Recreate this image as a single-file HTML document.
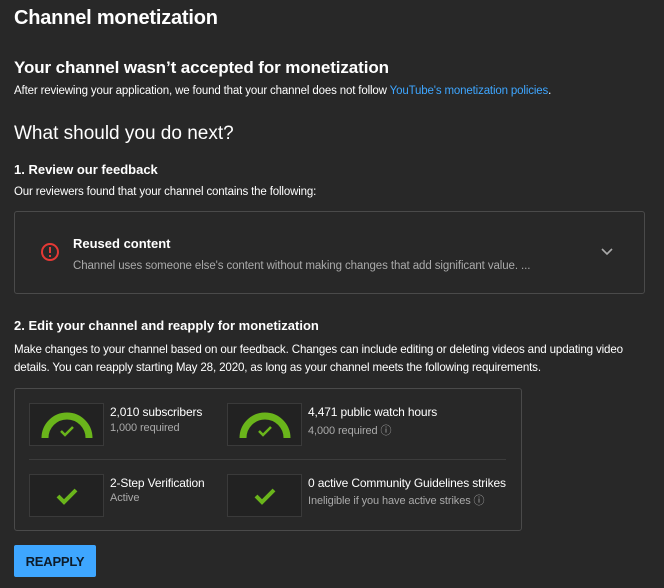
<html><head><style>
body{margin:0;width:664px;height:588px;background:#282828;font-family:"Liberation Sans",sans-serif;color:#fff;position:relative;overflow:hidden}
.a{position:absolute;white-space:nowrap}
.s{font-size:12px;color:#fff;letter-spacing:-0.15px}
.g{color:#aaa;font-size:11px;letter-spacing:-0.1px}
.tile{position:absolute;width:73px;height:41px;border:1px solid #3a3a3a;background:#222}
</style></head><body>
<div class="a" style="left:14px;top:7px;font-size:20px;font-weight:bold;letter-spacing:-0.2px">Channel monetization</div>
<div class="a" style="left:14px;top:58px;font-size:17px;font-weight:bold;letter-spacing:-0.1px">Your channel wasn’t accepted for monetization</div>
<div class="a s" style="left:14px;top:85px;font-size:11.5px">After reviewing your application, we found that your channel does not follow <span style="color:#3ea6ff">YouTube's monetization policies</span>.</div>
<div class="a" style="left:14px;top:123px;font-size:19px">What should you do next?</div>
<div class="a" style="left:14px;top:162px;font-size:13px;font-weight:bold">1. Review our feedback</div>
<div class="a s" style="left:14px;top:186px;font-size:11.5px">Our reviewers found that your channel contains the following:</div>
<div class="a" style="left:14px;top:211px;width:629px;height:81px;border:1px solid #4a4a4a;border-radius:3px"></div>
<svg class="a" style="left:40px;top:242px" width="20" height="20"><circle cx="10" cy="10" r="8" fill="none" stroke="#e53935" stroke-width="2"/><rect x="9" y="5" width="2" height="6" fill="#e53935"/><rect x="9" y="13" width="2" height="2" fill="#e53935"/></svg>
<div class="a" style="left:73px;top:236px;font-size:13px;font-weight:bold">Reused content</div>
<div class="a g" style="left:73px;top:260px;font-size:11.5px">Channel uses someone else's content without making changes that add significant value. ...</div>
<svg class="a" style="left:601px;top:247px" width="12" height="10"><path d="M1 2 L6 7 L11 2" fill="none" stroke="#aaa" stroke-width="1.6"/></svg>
<div class="a" style="left:14px;top:318px;font-size:13px;font-weight:bold">2. Edit your channel and reapply for monetization</div>
<div class="a s" style="left:14px;top:343px;font-size:11.6px">Make changes to your channel based on our feedback. Changes can include editing or deleting videos and updating video</div>
<div class="a s" style="left:14px;top:361px;font-size:11.6px">details. You can reapply starting May 28, 2020, as long as your channel meets the following requirements.</div>
<div class="a" style="left:14px;top:388px;width:506px;height:141px;border:1px solid #4a4a4a;border-radius:3px"></div>
<div class="a" style="left:29px;top:459px;width:477px;height:1px;background:#3c3c3c"></div>
<div class="tile" style="left:29px;top:403px"><svg width="73" height="41"><path d="M15 34 A22 22 0 0 1 59 34" fill="none" stroke="#6ab51b" stroke-width="7"/><path d="M31 27 L35 31 L43 23" fill="none" stroke="#6ab51b" stroke-width="2.5"/></svg></div>
<div class="tile" style="left:227px;top:403px"><svg width="73" height="41"><path d="M15 34 A22 22 0 0 1 59 34" fill="none" stroke="#6ab51b" stroke-width="7"/><path d="M31 27 L35 31 L43 23" fill="none" stroke="#6ab51b" stroke-width="2.5"/></svg></div>
<div class="tile" style="left:29px;top:474px"><svg width="73" height="41"><path d="M28 21 L34 27 L46 15" fill="none" stroke="#6ab51b" stroke-width="4"/></svg></div>
<div class="tile" style="left:227px;top:474px"><svg width="73" height="41"><path d="M28 21 L34 27 L46 15" fill="none" stroke="#6ab51b" stroke-width="4"/></svg></div>
<div class="a s" style="left:110px;top:405px">2,010 subscribers</div>
<div class="a g" style="left:110px;top:422px">1,000 required</div>
<div class="a s" style="left:308px;top:405px">4,471 public watch hours</div>
<div class="a g" style="left:308px;top:422px">4,000 required ⓘ</div>
<div class="a s" style="left:110px;top:476px">2-Step Verification</div>
<div class="a g" style="left:110px;top:492px">Active</div>
<div class="a s" style="left:308px;top:476px">0 active Community Guidelines strikes</div>
<div class="a g" style="left:308px;top:492px">Ineligible if you have active strikes ⓘ</div>
<div class="a" style="left:14px;top:545px;width:82px;height:32px;background:#3ea6ff;border-radius:2px;color:#0d1b2a;font-size:13px;font-weight:bold;line-height:33px;text-align:center;letter-spacing:-0.2px">REAPPLY</div>
</body></html>
